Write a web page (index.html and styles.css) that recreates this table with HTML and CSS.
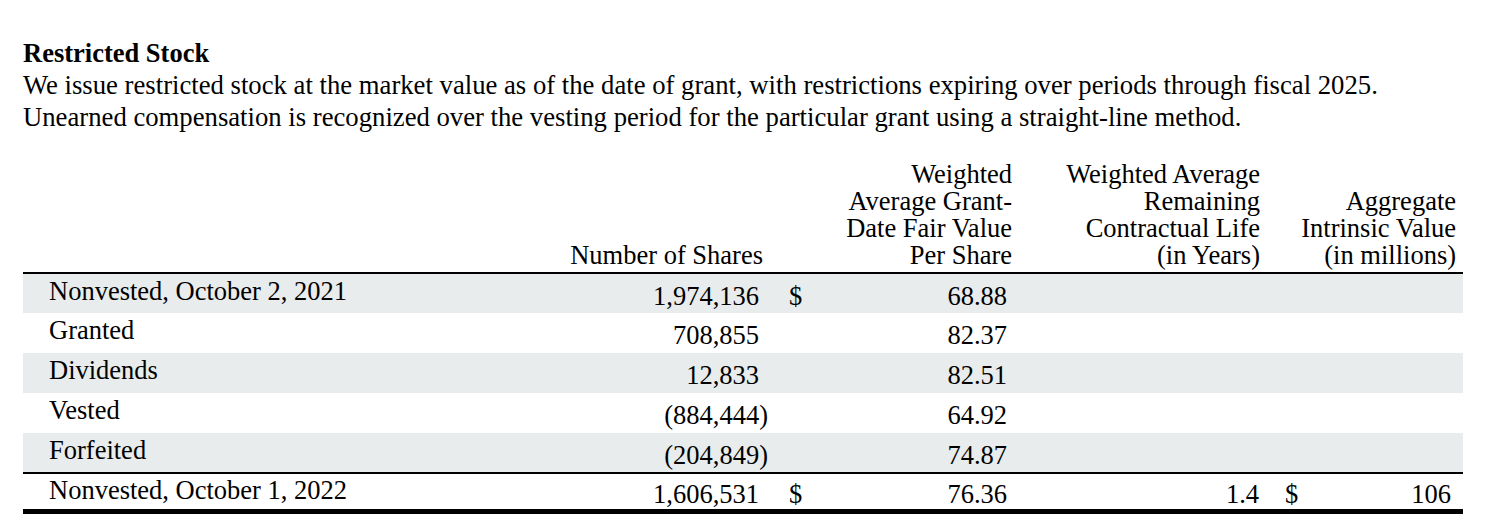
FILE: index.html
```html
<!DOCTYPE html>
<html lang="en">
<head>
<meta charset="utf-8">
<title>Restricted Stock</title>
<link rel="stylesheet" href="styles.css">
</head>
<body>
<div class="page">
  <h2 class="title">Restricted Stock</h2>
  <p class="intro">We issue restricted stock at the market value as of the date of grant, with restrictions expiring over periods through fiscal 2025.<br>Unearned compensation is recognized over the vesting period for the particular grant using a straight-line method.</p>
  <table class="stock">
    <colgroup>
      <col class="c-label">
      <col class="c-shares">
      <col class="c-cur">
      <col class="c-value">
      <col class="c-years">
      <col class="c-cur2">
      <col class="c-agg">
    </colgroup>
    <thead>
      <tr>
        <th class="h-label"></th>
        <th class="h-shares">Number of Shares</th>
        <th class="h-value" colspan="2">Weighted<br>Average Grant-<br>Date Fair Value<br>Per Share</th>
        <th class="h-years">Weighted Average<br>Remaining<br>Contractual Life<br>(in Years)</th>
        <th class="h-agg" colspan="2">Aggregate<br>Intrinsic Value<br>(in millions)</th>
      </tr>
    </thead>
    <tbody>
      <tr class="shade">
        <td class="label">Nonvested, October 2, 2021</td>
        <td class="num shares">1,974,136</td>
        <td class="cur">$</td>
        <td class="num value">68.88</td>
        <td class="num years"></td>
        <td class="cur cur2"></td>
        <td class="num agg"></td>
      </tr>
      <tr>
        <td class="label">Granted</td>
        <td class="num shares">708,855</td>
        <td class="cur"></td>
        <td class="num value">82.37</td>
        <td class="num years"></td>
        <td class="cur cur2"></td>
        <td class="num agg"></td>
      </tr>
      <tr class="shade">
        <td class="label">Dividends</td>
        <td class="num shares">12,833</td>
        <td class="cur"></td>
        <td class="num value">82.51</td>
        <td class="num years"></td>
        <td class="cur cur2"></td>
        <td class="num agg"></td>
      </tr>
      <tr>
        <td class="label">Vested</td>
        <td class="num shares">(884,444<span class="paren">)</span></td>
        <td class="cur"></td>
        <td class="num value">64.92</td>
        <td class="num years"></td>
        <td class="cur cur2"></td>
        <td class="num agg"></td>
      </tr>
      <tr class="shade">
        <td class="label">Forfeited</td>
        <td class="num shares">(204,849<span class="paren">)</span></td>
        <td class="cur"></td>
        <td class="num value">74.87</td>
        <td class="num years"></td>
        <td class="cur cur2"></td>
        <td class="num agg"></td>
      </tr>
      <tr class="total">
        <td class="label">Nonvested, October 1, 2022</td>
        <td class="num shares">1,606,531</td>
        <td class="cur">$</td>
        <td class="num value">76.36</td>
        <td class="num years">1.4</td>
        <td class="cur cur2">$</td>
        <td class="num agg">106</td>
      </tr>
    </tbody>
  </table>
</div>
</body>
</html>
```

FILE: styles.css
```css
html, body {
  margin: 0;
  padding: 0;
  background: #ffffff;
}

body {
  font-family: "Liberation Serif", "Times New Roman", serif;
  font-size: 26.5px;
  color: #000000;
}

.page {
  padding: 37px 0 0 23px;
  width: 1440px;
}

.title {
  margin: 0;
  font-size: 26.5px;
  font-weight: bold;
  line-height: 32px;
}

.intro {
  margin: 0;
  font-size: 26.7px;
  line-height: 32px;
}

.stock {
  margin-top: 28px;
  width: 1440px;
  border-collapse: collapse;
  table-layout: fixed;
  border-bottom: 5px solid #000000;
}

.c-label { width: 540px; }
.c-shares { width: 212px; }
.c-cur { width: 55px; }
.c-value { width: 200px; }
.c-years { width: 240px; }
.c-cur2 { width: 50px; }
.c-agg { width: 143px; }

.stock th {
  font-weight: normal;
  text-align: right;
  vertical-align: bottom;
  line-height: 27px;
  padding: 0 0 3px 0;
  border-bottom: 2px solid #000000;
}

.h-shares { padding-right: 12px !important; }
.h-value { padding-right: 18px !important; }
.h-years { padding-right: 10px !important; }
.h-agg { padding-right: 7px !important; }

.stock tbody tr {
  height: 40px;
}

.stock td {
  padding: 0;
  line-height: 30px;
  vertical-align: top;
  white-space: nowrap;
}

.shade td {
  background: #e9ecec;
}

.label {
  padding-left: 26px !important;
  padding-top: 2px !important;
}

.num {
  text-align: right;
  padding-top: 7px !important;
}

.shares { padding-right: 16px !important; }
.value { padding-right: 23px !important; }
.years { padding-right: 11px !important; }
.agg { padding-right: 12px !important; }

.cur {
  text-align: left;
  padding-left: 14px !important;
  padding-top: 7px !important;
}

.cur2 { padding-left: 15px !important; }

.paren {
  margin-right: -9px;
}

.stock tbody tr.total {
  height: 34px;
}

.total td {
  border-top: 2px solid #000000;
}

.total .label {
  padding-top: 1px !important;
}

.total .num,
.total .cur {
  padding-top: 5px !important;
}
```
